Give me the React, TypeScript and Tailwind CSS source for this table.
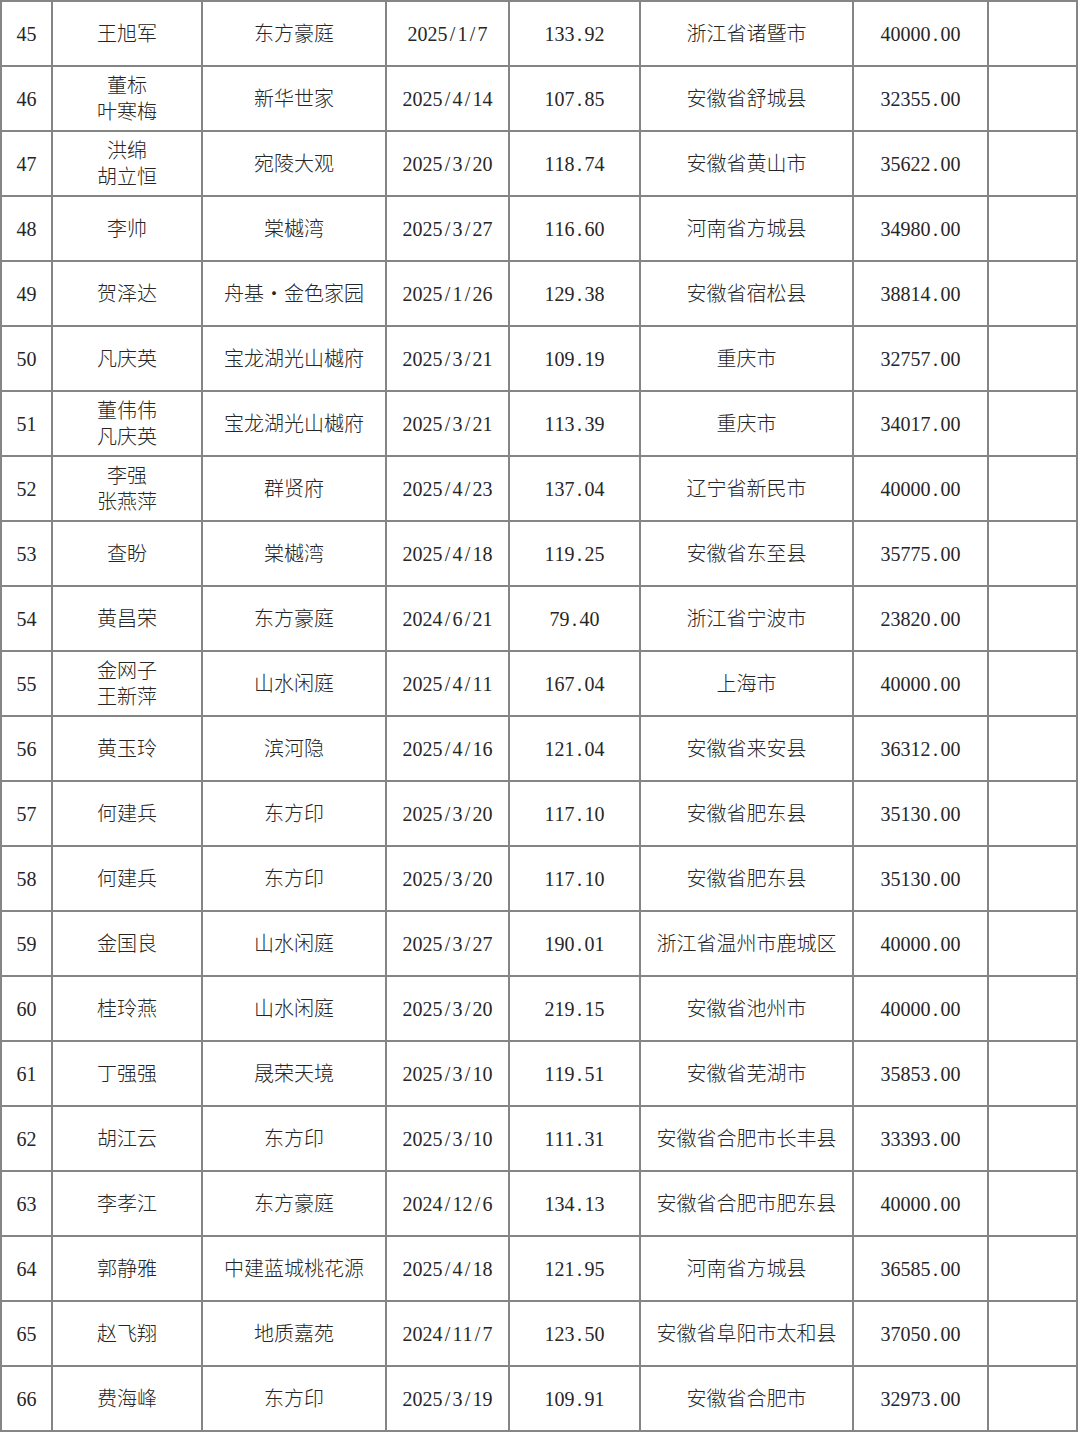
import React from 'react'

type Row = [string, string[], string, string, string, string, string]

const rows: Row[] = [
  ['45', ['王旭军'], '东方豪庭', '2025/1/7', '133.92', '浙江省诸暨市', '40000.00'],
  ['46', ['董标', '叶寒梅'], '新华世家', '2025/4/14', '107.85', '安徽省舒城县', '32355.00'],
  ['47', ['洪绵', '胡立恒'], '宛陵大观', '2025/3/20', '118.74', '安徽省黄山市', '35622.00'],
  ['48', ['李帅'], '棠樾湾', '2025/3/27', '116.60', '河南省方城县', '34980.00'],
  ['49', ['贺泽达'], '舟基・金色家园', '2025/1/26', '129.38', '安徽省宿松县', '38814.00'],
  ['50', ['凡庆英'], '宝龙湖光山樾府', '2025/3/21', '109.19', '重庆市', '32757.00'],
  ['51', ['董伟伟', '凡庆英'], '宝龙湖光山樾府', '2025/3/21', '113.39', '重庆市', '34017.00'],
  ['52', ['李强', '张燕萍'], '群贤府', '2025/4/23', '137.04', '辽宁省新民市', '40000.00'],
  ['53', ['查盼'], '棠樾湾', '2025/4/18', '119.25', '安徽省东至县', '35775.00'],
  ['54', ['黄昌荣'], '东方豪庭', '2024/6/21', '79.40', '浙江省宁波市', '23820.00'],
  ['55', ['金网子', '王新萍'], '山水闲庭', '2025/4/11', '167.04', '上海市', '40000.00'],
  ['56', ['黄玉玲'], '滨河隐', '2025/4/16', '121.04', '安徽省来安县', '36312.00'],
  ['57', ['何建兵'], '东方印', '2025/3/20', '117.10', '安徽省肥东县', '35130.00'],
  ['58', ['何建兵'], '东方印', '2025/3/20', '117.10', '安徽省肥东县', '35130.00'],
  ['59', ['金国良'], '山水闲庭', '2025/3/27', '190.01', '浙江省温州市鹿城区', '40000.00'],
  ['60', ['桂玲燕'], '山水闲庭', '2025/3/20', '219.15', '安徽省池州市', '40000.00'],
  ['61', ['丁强强'], '晟荣天境', '2025/3/10', '119.51', '安徽省芜湖市', '35853.00'],
  ['62', ['胡江云'], '东方印', '2025/3/10', '111.31', '安徽省合肥市长丰县', '33393.00'],
  ['63', ['李孝江'], '东方豪庭', '2024/12/6', '134.13', '安徽省合肥市肥东县', '40000.00'],
  ['64', ['郭静雅'], '中建蓝城桃花源', '2025/4/18', '121.95', '河南省方城县', '36585.00'],
  ['65', ['赵飞翔'], '地质嘉苑', '2024/11/7', '123.50', '安徽省阜阳市太和县', '37050.00'],
  ['66', ['费海峰'], '东方印', '2025/3/19', '109.91', '安徽省合肥市', '32973.00'],
]

// half-width fixed pitch, like the Song face in the source document
function Num({ v }: { v: string }) {
  return (
    <span className="whitespace-nowrap">
      {v.split('').map((c, i) => (
        <span key={i} className="inline-block w-[10px] text-center">
          {c}
        </span>
      ))}
    </span>
  )
}

function Cell({ children }: { children?: React.ReactNode }) {
  return (
    <div className="h-[65px] border-r-2 border-b-2 border-[#858585] flex flex-col items-center justify-center text-center leading-[26px] pt-[1px]">
      {children}
    </div>
  )
}

export default function App() {
  return (
    <div className="w-[1080px] h-[1434px] bg-white">
      <div
        className="w-[1078px] grid grid-cols-[51px_150px_184px_123px_131px_213px_135px_89px] border-l-2 border-t-2 border-[#858585] text-[20px] text-[#262626] font-light"
        style={{ fontFamily: '"Liberation Serif", "Noto Sans CJK SC", serif' }}
      >
        {rows.map((r) => (
          <React.Fragment key={r[0]}>
            <Cell><Num v={r[0]} /></Cell>
            <Cell>
              {r[1].map((n) => (
                <span key={n}>{n}</span>
              ))}
            </Cell>
            <Cell>{r[2]}</Cell>
            <Cell><Num v={r[3]} /></Cell>
            <Cell><Num v={r[4]} /></Cell>
            <Cell>{r[5]}</Cell>
            <Cell><Num v={r[6]} /></Cell>
            <Cell />
          </React.Fragment>
        ))}
      </div>
    </div>
  )
}
